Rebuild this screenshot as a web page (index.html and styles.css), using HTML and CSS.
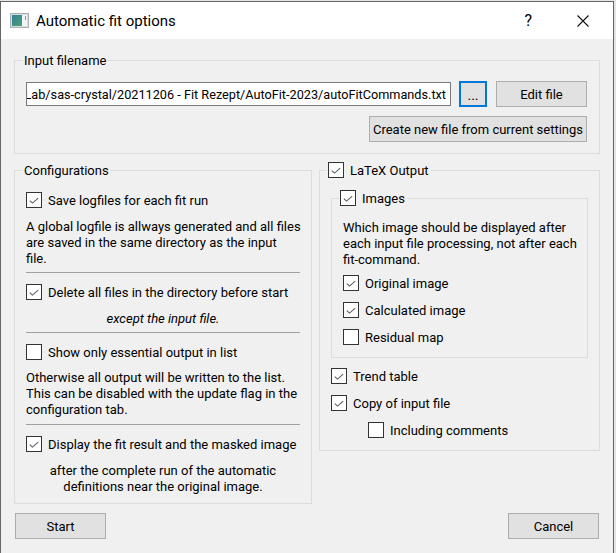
FILE: index.html
```html
<!DOCTYPE html>
<html lang="en">
<head>
<meta charset="utf-8">
<title>Automatic fit options</title>
<link rel="stylesheet" href="styles.css">
</head>
<body>
<svg class="defs" width="0" height="0" aria-hidden="true">
  <symbol id="tick" viewBox="0 0 16 16"><path d="M3.2 8.6 6.3 11.6 12.8 5.8" fill="none" stroke="#5a5a5a" stroke-width="1.2"/></symbol>
  <linearGradient id="pic" x1="0" y1="0" x2="1" y2="1"><stop offset="0" stop-color="#2f7f9c"/><stop offset="1" stop-color="#4fa06f"/></linearGradient>
</svg>
<div class="window">
  <header class="titlebar">
    <svg class="appicon" width="19" height="15" viewBox="0 0 19 15"><rect x=".5" y=".5" width="18" height="14" fill="#d9dde0" stroke="#a9afb3"/><rect x="2" y="2" width="10" height="11" fill="url(#pic)"/><rect x="12" y="2" width="5" height="11" fill="#f2f5f5"/><rect x="15" y="3" width="1" height="4" fill="#5fa8a0"/></svg>
    <span class="title">Automatic fit options</span>
    <span class="help">?</span>
    <svg class="close" width="12" height="12" viewBox="0 0 12 12"><path d="M.5.5 11.5 11.5M11.5.5.5 11.5" stroke="#111" stroke-width="1.1" fill="none"/></svg>
  </header>
  <main class="content">
    <section class="group file-group">
      <span class="legend">Input filename</span>
      <div class="file-row">
        <div class="path"><span>Lab/sas-crystal/20211206 - Fit Rezept/AutoFit-2023/autoFitCommands.txt</span></div>
        <button class="btn dots">...</button>
        <button class="btn edit">Edit file</button>
      </div>
      <div class="create-row"><button class="btn create">Create new file from current settings</button></div>
    </section>
    <div class="columns">
      <section class="group config">
        <span class="legend">Configurations</span>
        <label class="check"><span class="box"><svg><use href="#tick"/></svg></span>Save logfiles for each fit run</label>
        <p class="note n1">A global logfile is allways generated and all files<br>are saved in the same directory as the input<br>file.</p>
        <hr class="sep">
        <label class="check"><span class="box"><svg><use href="#tick"/></svg></span>Delete all files in the directory before start</label>
        <p class="note n1 center"><em>except the input file.</em></p>
        <hr class="sep">
        <label class="check"><span class="box"></span>Show only essential output in list</label>
        <p class="note n2">Otherwise all output will be written to the list.<br>This can be disabled with the update flag in the<br>configuration tab.</p>
        <hr class="sep s2">
        <label class="check"><span class="box"><svg><use href="#tick"/></svg></span>Display the fit result and the masked image</label>
        <p class="note n1 center">after the complete run of the automatic<br>definitions near the original image.</p>
      </section>
      <section class="group latex">
        <label class="check legend boxed"><span class="box"><svg><use href="#tick"/></svg></span>LaTeX Output</label>
        <section class="group images">
          <label class="check legend boxed"><span class="box"><svg><use href="#tick"/></svg></span>Images</label>
          <p class="note">Which image should be displayed after<br>each input file processing, not after each<br>fit-command.</p>
          <label class="check first"><span class="box"><svg><use href="#tick"/></svg></span>Original image</label>
          <label class="check"><span class="box"><svg><use href="#tick"/></svg></span>Calculated image</label>
          <label class="check"><span class="box"></span>Residual map</label>
        </section>
        <label class="check"><span class="box"><svg><use href="#tick"/></svg></span>Trend table</label>
        <label class="check"><span class="box"><svg><use href="#tick"/></svg></span>Copy of input file</label>
        <label class="check indent"><span class="box"></span>Including comments</label>
      </section>
    </div>
    <footer class="actions">
      <button class="btn wide">Start</button>
      <button class="btn wide">Cancel</button>
    </footer>
  </main>
</div>
</body>
</html>
```
FILE: styles.css
```css
* { box-sizing: border-box; }
html, body { margin: 0; height: 100%; }
body {
  width: 616px;
  height: 553px;
  overflow: hidden;
  background: #e4e4e4;
  font-family: Roboto, "Noto Sans", sans-serif;
  font-size: 13px;
  line-height: 16px;
  color: #000;
}
.defs { position: absolute; }
.window {
  margin-top: 1px;
  width: 614px;
  height: 552px;
  border: 1px solid #666;
  border-width: 1px 1px 0 1px;
  background: #f0f0f0;
}
.titlebar {
  height: 37px;
  background: #fff;
  display: flex;
  align-items: center;
}
.appicon { margin-left: 9px; flex: none; }
.title { margin-left: 7px; font-size: 15px; flex: 1; }
.help { font-size: 16px; margin-right: 45px; }
.close { margin-right: 24px; }
.content { padding: 21px 13px 0; }
.group {
  position: relative;
  border: 1px solid #dcdcdc;
}
.legend {
  position: absolute;
  top: -9px;
  left: 8px;
  height: 16px;
  line-height: 18px;
  background: #f0f0f0;
  padding: 0 1px;
  white-space: nowrap;
}
.file-group { height: 94px; padding: 20px 12px 0 11px; }
.file-row { display: flex; align-items: center; height: 26px; }
.path {
  width: 425px;
  height: 24px;
  border: 1px solid #7a7a7a;
  background: #fff;
  display: flex;
  justify-content: flex-end;
  align-items: center;
  overflow: hidden;
  padding: 2px 4px 0 0;
  font-size: 12.7px;
  white-space: nowrap;
}
.path span { flex: none; }
.btn {
  height: 26px;
  padding: 2px 0 0;
  border: 1px solid #adadad;
  background: #e1e1e1;
  color: #000;
  font: inherit;
}
.dots { width: 28px; margin-left: 8px; border: 2px solid #0078d7; font-size: 14px; }
.edit { width: 91px; margin-left: 9px; }
.create-row { display: flex; justify-content: flex-end; margin-top: 9px; }
.create { width: 218px; }
.columns { display: flex; align-items: flex-start; gap: 7px; margin-top: 16px; }
.config { width: 298px; height: 334px; padding: 21px 11px 0; }
.latex { width: 281px; height: 281px; padding: 27px 11px 0; }
.images { height: 160px; margin-bottom: 10px; padding: 21px 11px 0; }
.check { display: flex; align-items: flex-start; height: 16px; line-height: 18px; white-space: nowrap; }
.box {
  flex: none;
  width: 16px;
  height: 16px;
  margin-right: 6px;
  border: 1px solid #333;
  background: #fff;
}
.box svg { display: block; width: 14px; height: 14px; }
.legend.boxed { left: 7px; top: -9px; padding-right: 2px; }
.latex > .check:not(.legend) + .check { margin-top: 11px; }
.latex > .indent { margin-left: 37px; }
.images > .check:not(.legend) + .check { margin-top: 11px; }
.images .first { margin-top: 7px; }
.note { margin: 0; white-space: nowrap; }
.n1 { margin: 11px 0 0; }
.n2 { margin: 10px 0 0; }
.center { text-align: center; }
.sep { margin: 5px 0 11px; border: 0; height: 1px; background: #a0a0a0; }
.s2 { margin-top: 6px; }
.actions { display: flex; justify-content: space-between; margin-top: 9px; padding: 0 1px; }
.wide { width: 91px; }
```
